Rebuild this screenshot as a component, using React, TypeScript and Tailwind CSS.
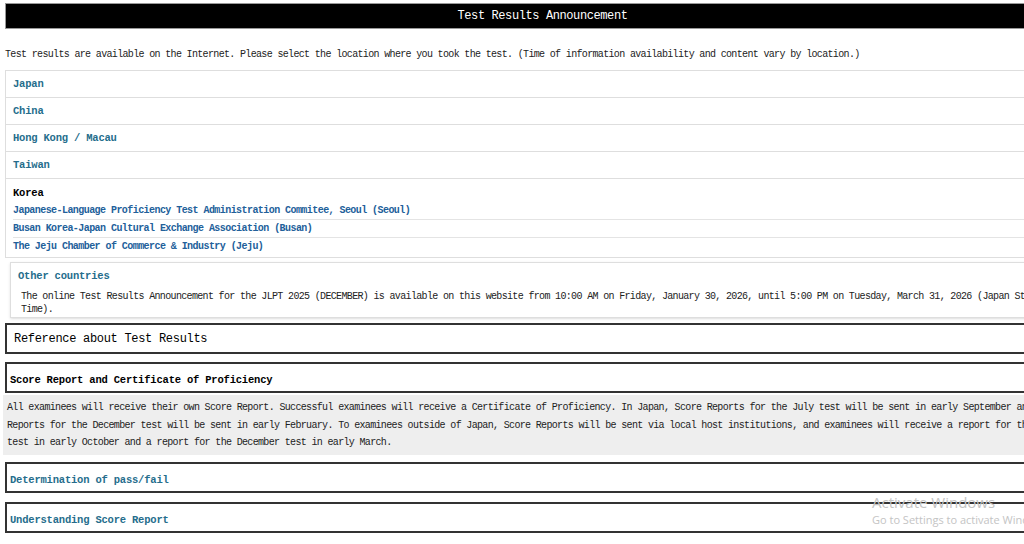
const mono = "font-['Liberation_Mono','DejaVu_Sans_Mono',monospace]"

const regions = ['Japan', 'China', 'Hong Kong / Macau', 'Taiwan']

const korea = [
  'Japanese-Language Proficiency Test Administration Commitee, Seoul (Seoul)',
  'Busan Korea-Japan Cultural Exchange Association (Busan)',
  'The Jeju Chamber of Commerce & Industry (Jeju)',
]

const scoreLines = [
  'All examinees will receive their own Score Report. Successful examinees will receive a Certificate of Proficiency. In Japan, Score Reports for the July test will be sent in early September and Score',
  'Reports for the December test will be sent in early February. To examinees outside of Japan, Score Reports will be sent via local host institutions, and examinees will receive a report for the July',
  'test in early October and a report for the December test in early March.',
]

export default function App() {
  return (
    <div className={`relative w-full h-[544px] overflow-hidden bg-white text-[#222] ${mono}`}>
      <div className="w-[1080px] pt-[3px]">
        {/* title bar */}
        <div className="ml-[5px] h-[26px] bg-black border border-[#999] flex items-center justify-center">
          <h1 className="text-white text-[12px] tracking-[-0.4px] leading-none">Test Results Announcement</h1>
        </div>

        <p className="ml-[5px] mt-[19px] text-[10px] tracking-[-0.66px] leading-[14px]">
          Test results are available on the Internet. Please select the location where you took the test. (Time of information availability and content vary by location.)
        </p>

        {/* locations */}
        <div className="ml-[5px] mt-[8px] border border-[#dedede]">
          {regions.map((r) => (
            <div key={r} className="h-[27px] flex items-center px-[7px] pt-[2px] border-b border-[#dedede]">
              <a href="#" className="text-[#256d8c] font-bold text-[10.5px] tracking-[-0.2px]">{r}</a>
            </div>
          ))}
          <div className="px-[7px] pt-[6px] pb-[3px]">
            <div className="font-bold text-[10.5px] tracking-[-0.2px] leading-[17px] text-black">Korea</div>
            {korea.map((k, i) => (
              <div
                key={k}
                className={i < korea.length - 1 ? 'h-[18px] flex items-center border-b border-[#e4e4e4]' : 'h-[16px] flex items-center'}
              >
                <a href="#" className="text-[#22609a] font-bold text-[10px] tracking-[-0.56px]">{k}</a>
              </div>
            ))}
          </div>
        </div>

        {/* other countries */}
        <div className="ml-[10px] mt-[4px] h-[56px] border border-[#dedede] shadow-sm px-[7px] pt-[6px]">
          <a href="#" className="text-[#256d8c] font-bold text-[10.5px] tracking-[-0.2px] leading-[14px] block">Other countries</a>
          <p className="mt-[7px] ml-[3px] text-[10px] tracking-[-0.66px] leading-[13px]">
            The online Test Results Announcement for the JLPT 2025 (DECEMBER) is available on this website from 10:00 AM on Friday, January 30, 2026, until 5:00 PM on Tuesday, March 31, 2026 (Japan Standard
            <br />
            Time).
          </p>
        </div>

        {/* reference */}
        <div className="ml-[5px] mt-[5px] h-[31px] border-2 border-[#333] flex items-center px-[7px]">
          <h2 className="text-black text-[12px] tracking-[-0.3px]">Reference about Test Results</h2>
        </div>

        <div className="ml-[5px] mt-[8px] h-[31px] border-2 border-[#333] flex items-center px-[3px] pt-[7px]">
          <h3 className="text-black font-bold text-[10.5px] tracking-[-0.2px]">Score Report and Certificate of Proficiency</h3>
        </div>
        <div className="ml-[3px] mt-[2px] h-[60px] bg-[#eeeeee] px-[4px] pt-[4px]">
          {scoreLines.map((l) => (
            <p key={l} className="text-[10px] tracking-[-0.66px] leading-[17.5px] whitespace-nowrap">{l}</p>
          ))}
        </div>

        <div className="ml-[5px] mt-[7px] h-[31px] border-2 border-[#333] flex items-center px-[3px] pt-[6px]">
          <a href="#" className="text-[#256d8c] font-bold text-[10.5px] tracking-[-0.2px]">Determination of pass/fail</a>
        </div>
        <div className="ml-[5px] mt-[9px] h-[31px] border-2 border-[#333] flex items-center px-[3px] pt-[6px]">
          <a href="#" className="text-[#256d8c] font-bold text-[10.5px] tracking-[-0.2px]">Understanding Score Report</a>
        </div>
      </div>

      {/* OS watermark over the page */}
      <div className="absolute left-[872px] top-[493px] font-['Open_Sans',sans-serif] text-[#c4c4c4] whitespace-nowrap pointer-events-none">
        <div className="text-[15px] leading-[18px]">Activate Windows</div>
        <div className="text-[11px] leading-[16px] mt-[1px]">Go to Settings to activate Windows.</div>
      </div>
    </div>
  )
}
